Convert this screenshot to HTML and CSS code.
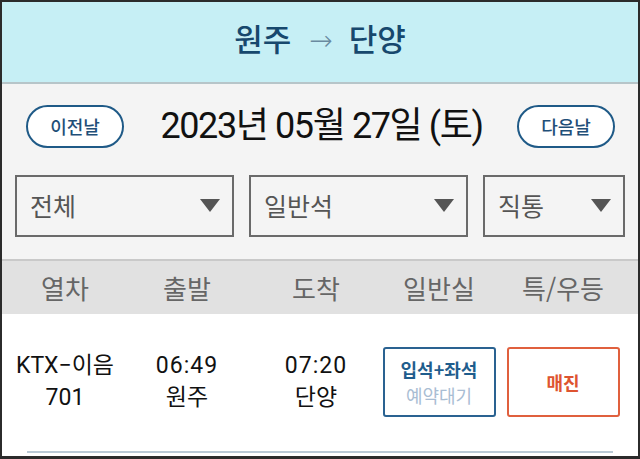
FILE: index.html
```html
<!DOCTYPE html>
<html lang="ko">
<head>
    <meta charset="UTF-8">
    <meta name="viewport" content="width=device-width, initial-scale=1.0">
    <title>원주 → 단양 열차 조회</title>
    <link rel="stylesheet" href="styles.css">
</head>
<body>
    <div class="frame">
        <div class="route">
            <span class="station">원주</span>
            <span class="route-arrow">→</span>
            <span class="station">단양</span>
        </div>

        <div class="controls">
            <div class="date-bar">
                <button class="pill">이전날</button>
                <div class="date">2023년 05월 27일 (토)</div>
                <button class="pill">다음날</button>
            </div>

            <div class="filters">
                <div class="select">
                    <span>전체</span>
                    <span class="caret"></span>
                </div>
                <div class="select">
                    <span>일반석</span>
                    <span class="caret"></span>
                </div>
                <div class="select">
                    <span>직통</span>
                    <span class="caret"></span>
                </div>
            </div>
        </div>

        <div class="table-head">
            <div class="cell">열차</div>
            <div class="cell">출발</div>
            <div class="cell">도착</div>
            <div class="cell">일반실</div>
            <div class="cell">특/우등</div>
        </div>

        <div class="train-row">
            <div class="cell">
                <div class="stack">
                    <span>KTX−이음</span>
                    <span>701</span>
                </div>
            </div>
            <div class="cell">
                <div class="stack">
                    <span class="time">06:49</span>
                    <span>원주</span>
                </div>
            </div>
            <div class="cell">
                <div class="stack">
                    <span class="time">07:20</span>
                    <span>단양</span>
                </div>
            </div>
            <div class="cell">
                <button class="seat-btn seat-wait">
                    <span class="seat-main">입석+좌석</span>
                    <span class="seat-sub">예약대기</span>
                </button>
            </div>
            <div class="cell">
                <button class="seat-btn seat-soldout">
                    <span class="seat-main">매진</span>
                </button>
            </div>
        </div>

        <div class="row-divider"></div>
    </div>
</body>
</html>
```

FILE: styles.css
```css
* {
    margin: 0;
    padding: 0;
    box-sizing: border-box;
}

body {
    font-family: Roboto, "Noto Sans CJK KR", sans-serif;
    background: #fff;
}

.frame {
    width: 640px;
    height: 459px;
    border: 2px solid #2b2b2b;
    border-bottom-width: 3px;
    background: #fff;
    overflow: hidden;
}

.route {
    height: 82px;
    background: #c6eff5;
    border-bottom: 2px solid #b7c5c9;
    display: flex;
    justify-content: center;
    align-items: center;
    padding-bottom: 2px;
    color: #17486d;
    font-size: 31px;
    font-weight: 500;
    line-height: 40px;
}

.route-arrow {
    margin: 0 16px 0 18px;
    font-family: "DejaVu Sans", sans-serif;
    font-weight: 300;
    font-size: 28px;
    color: #6a8aa0;
}

.controls {
    background: #f4f4f4;
    padding: 21px 13px 22px;
    border-bottom: 2px solid #c9c9c9;
}

.date-bar {
    display: flex;
    justify-content: space-between;
    align-items: center;
    height: 43px;
    padding: 0 10px 0 11px;
    margin-bottom: 27px;
}

.pill {
    width: 98px;
    height: 43px;
    border: 2px solid #1f5a87;
    border-radius: 22px;
    background: #fff;
    color: #1f4f78;
    font-family: "Noto Sans CJK KR", sans-serif;
    font-size: 18px;
    font-weight: 500;
    line-height: 24px;
    padding-bottom: 2px;
}

.date {
    font-size: 36px;
    line-height: 43px;
    letter-spacing: -1.4px;
    color: #111;
    padding-left: 2px;
}

.filters {
    display: grid;
    grid-template-columns: 219px 219px 1fr;
    column-gap: 15px;
}

.select {
    height: 62px;
    border: 2px solid #6a6a6a;
    display: flex;
    justify-content: space-between;
    align-items: center;
    padding: 0 12px 2px 13px;
    font-family: "Noto Sans CJK KR", sans-serif;
    font-size: 25px;
    line-height: 30px;
    color: #555;
}

.caret {
    width: 0;
    height: 0;
    border-left: 10px solid transparent;
    border-right: 10px solid transparent;
    border-top: 13px solid #555;
}

.table-head,
.train-row {
    display: grid;
    grid-template-columns: 126px 118px 140px 106px 1fr;
    padding-right: 4px;
}

.cell {
    display: flex;
    justify-content: center;
    align-items: center;
}

.table-head {
    height: 53px;
    background: #e1e1e1;
    font-family: "Noto Sans CJK KR", sans-serif;
    font-size: 26px;
    line-height: 30px;
    color: #666;
}

.table-head .cell {
    padding-top: 1px;
}

.train-row {
    padding-top: 33px;
    height: 103px;
    font-size: 23px;
    color: #111;
}

.stack {
    display: flex;
    flex-direction: column;
    align-items: center;
    line-height: 32px;
    white-space: nowrap;
}

.time {
    letter-spacing: 1px;
}

.seat-btn {
    flex: none;
    width: 113px;
    height: 70px;
    background: #fff;
    border: 2px solid;
    border-radius: 3px;
    display: flex;
    flex-direction: column;
    justify-content: center;
    align-items: center;
    font-family: "Noto Sans CJK KR", sans-serif;
    font-size: 18px;
    line-height: 26px;
}

.seat-wait {
    border-color: #2a6291;
    color: #1f5d8d;
}

.seat-soldout {
    border-color: #e0603e;
    color: #de5430;
}

.seat-main {
    font-weight: 700;
}

.seat-sub {
    color: #a9bdd3;
}

.row-divider {
    margin: 34px 25px 0 25px;
    height: 2px;
    background: #b9c9d5;
}
```
